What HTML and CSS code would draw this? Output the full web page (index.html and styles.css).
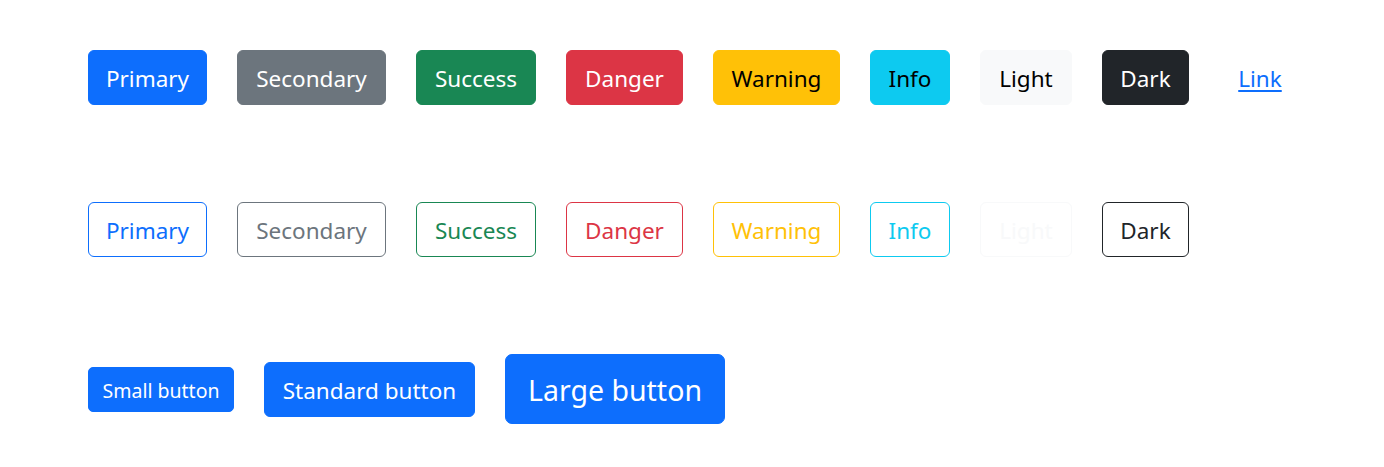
FILE: index.html
```html
<!DOCTYPE html>
<html lang="en">
<head>
<meta charset="utf-8">
<title>Buttons</title>
<link rel="stylesheet" href="styles.css">
</head>
<body>
<main class="page">
  <div class="row">
    <button class="btn btn-primary w-primary">Primary</button>
    <button class="btn btn-secondary w-secondary">Secondary</button>
    <button class="btn btn-success w-success">Success</button>
    <button class="btn btn-danger w-danger">Danger</button>
    <button class="btn btn-warning w-warning">Warning</button>
    <button class="btn btn-info w-info">Info</button>
    <button class="btn btn-light w-light">Light</button>
    <button class="btn btn-dark w-dark">Dark</button>
    <button class="btn btn-link w-link">Link</button>
  </div>
  <div class="row">
    <button class="btn btn-outline-primary w-primary">Primary</button>
    <button class="btn btn-outline-secondary w-secondary">Secondary</button>
    <button class="btn btn-outline-success w-success">Success</button>
    <button class="btn btn-outline-danger w-danger">Danger</button>
    <button class="btn btn-outline-warning w-warning">Warning</button>
    <button class="btn btn-outline-info w-info">Info</button>
    <button class="btn btn-outline-light w-light">Light</button>
    <button class="btn btn-outline-dark w-dark">Dark</button>
  </div>
  <div class="row">
    <button class="btn btn-primary btn-sm w-small">Small button</button>
    <button class="btn btn-primary w-standard">Standard button</button>
    <button class="btn btn-primary btn-lg w-large">Large button</button>
  </div>
</main>
</body>
</html>
```
FILE: styles.css
```css
* { box-sizing: border-box; }
html, body { margin: 0; padding: 0; background: #fff; }
body {
  font-family: "Noto Sans", "Open Sans", "DejaVu Sans", sans-serif;
}
.page {
  padding: 50px 0 0 88px;
  display: flex;
  flex-direction: column;
  gap: 97px;
}
.row {
  display: flex;
  align-items: center;
  gap: 30px;
}
.btn {
  display: inline-flex;
  justify-content: center;
  align-items: center;
  font-family: inherit;
  font-size: 22.5px;
  font-weight: 400;
  line-height: 35px;
  padding: 10px 0 8px;
  border: 1px solid transparent;
  border-radius: 6px;
  background: transparent;
  white-space: nowrap;
  cursor: pointer;
}
.btn-sm { font-size: 19.5px; line-height: 31px; padding: 7px 0 5px; border-radius: 5px; }
.btn-lg { font-size: 28.5px; line-height: 44px; padding: 13px 0 11px; border-radius: 7px; }

.w-primary { width: 119px; }
.w-secondary { width: 149px; }
.w-success { width: 120px; }
.w-danger { width: 117px; }
.w-warning { width: 127px; }
.w-info { width: 80px; }
.w-light { width: 92px; }
.w-dark { width: 87px; }
.w-link { width: 82px; }
.w-small { width: 146px; }
.w-standard { width: 211px; }
.w-large { width: 220px; }

.btn-primary { background: #0d6efd; border-color: #0d6efd; color: #fff; }
.btn-secondary { background: #6c757d; border-color: #6c757d; color: #fff; }
.btn-success { background: #198754; border-color: #198754; color: #fff; }
.btn-danger { background: #dc3545; border-color: #dc3545; color: #fff; }
.btn-warning { background: #ffc107; border-color: #ffc107; color: #000; }
.btn-info { background: #0dcaf0; border-color: #0dcaf0; color: #000; }
.btn-light { background: #f8f9fa; border-color: #f8f9fa; color: #000; }
.btn-dark { background: #212529; border-color: #212529; color: #fff; }
.btn-link { color: #0d6efd; text-decoration: underline; text-underline-offset: 3px; }

.btn-outline-primary { color: #0d6efd; border-color: #0d6efd; }
.btn-outline-secondary { color: #6c757d; border-color: #6c757d; }
.btn-outline-success { color: #198754; border-color: #198754; }
.btn-outline-danger { color: #dc3545; border-color: #dc3545; }
.btn-outline-warning { color: #ffc107; border-color: #ffc107; }
.btn-outline-info { color: #0dcaf0; border-color: #0dcaf0; }
.btn-outline-light { color: #f8f9fa; border-color: #f8f9fa; }
.btn-outline-dark { color: #212529; border-color: #212529; }
```
